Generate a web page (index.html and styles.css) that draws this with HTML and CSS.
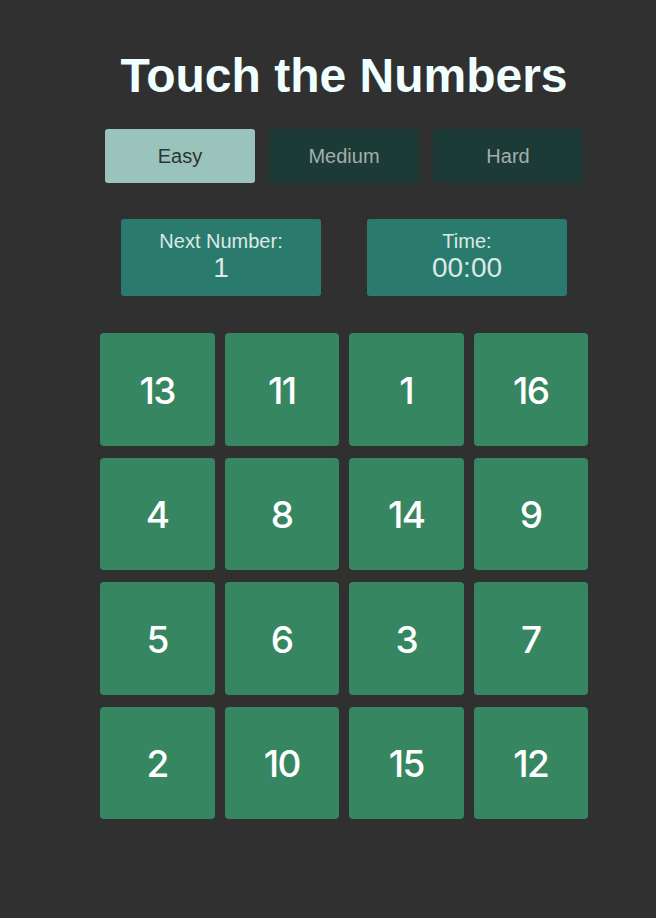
FILE: index.html
```html
<!DOCTYPE html>
<html>
<head>
<meta charset="utf-8">
<link rel="stylesheet" href="styles.css">
</head>
<body>
<main class="game">
  <h1 class="title">Touch the Numbers</h1>
  <div class="levels">
    <button class="level active">Easy</button>
    <button class="level">Medium</button>
    <button class="level">Hard</button>
  </div>
  <div class="stats">
    <div class="stat"><div class="label">Next Number:</div><div class="value">1</div></div>
    <div class="stat"><div class="label">Time:</div><div class="value">00:00</div></div>
  </div>
  <div class="board">
    <div class="tile">13</div><div class="tile">11</div><div class="tile">1</div><div class="tile">16</div>
    <div class="tile">4</div><div class="tile">8</div><div class="tile">14</div><div class="tile">9</div>
    <div class="tile">5</div><div class="tile">6</div><div class="tile">3</div><div class="tile">7</div>
    <div class="tile">2</div><div class="tile">10</div><div class="tile">15</div><div class="tile">12</div>
  </div>
</main>
</body>
</html>
```
FILE: styles.css
```css
html, body {
  margin: 0;
  padding: 0;
  background: #303030;
  font-family: "Liberation Sans", Arial, sans-serif;
}
.game {
  width: 488px;
  margin-left: 100px;
  padding-top: 48px;
  display: flex;
  flex-direction: column;
  align-items: center;
}
.title {
  margin: 0;
  font-size: 48px;
  line-height: 56px;
  font-weight: bold;
  color: #f0ffff;
}
.levels {
  margin-top: 25px;
  display: flex;
  gap: 14px;
}
.level {
  width: 150px;
  height: 54px;
  border: none;
  border-radius: 3px;
  background: #1c3b36;
  color: #a3aeab;
  font-family: "Liberation Sans", Arial, sans-serif;
  font-size: 20px;
  padding: 0;
}
.level.active {
  background: #9ac4bb;
  color: #2f3331;
}
.stats {
  margin-top: 36px;
  display: flex;
  gap: 46px;
}
.stat {
  width: 200px;
  height: 77px;
  box-sizing: border-box;
  padding-top: 11px;
  border-radius: 3px;
  background: #2a7b6d;
  color: #dde9e5;
  text-align: center;
}
.label {
  font-size: 20px;
  line-height: 22px;
}
.value {
  font-size: 28px;
  line-height: 32px;
}
.board {
  margin-top: 37px;
  width: 488px;
  display: grid;
  grid-template-columns: repeat(4, 1fr);
  grid-auto-rows: 112.5px;
  column-gap: 10px;
  row-gap: 12px;
}
.tile {
  background: #368662;
  border-radius: 4px;
  display: flex;
  align-items: center;
  justify-content: center;
  padding-top: 2px;
  box-sizing: border-box;
  color: #ffffff;
  font-family: "Inter", "Liberation Sans", sans-serif;
  font-weight: 500;
  font-size: 37px;
  letter-spacing: -1.5px;
}
```
